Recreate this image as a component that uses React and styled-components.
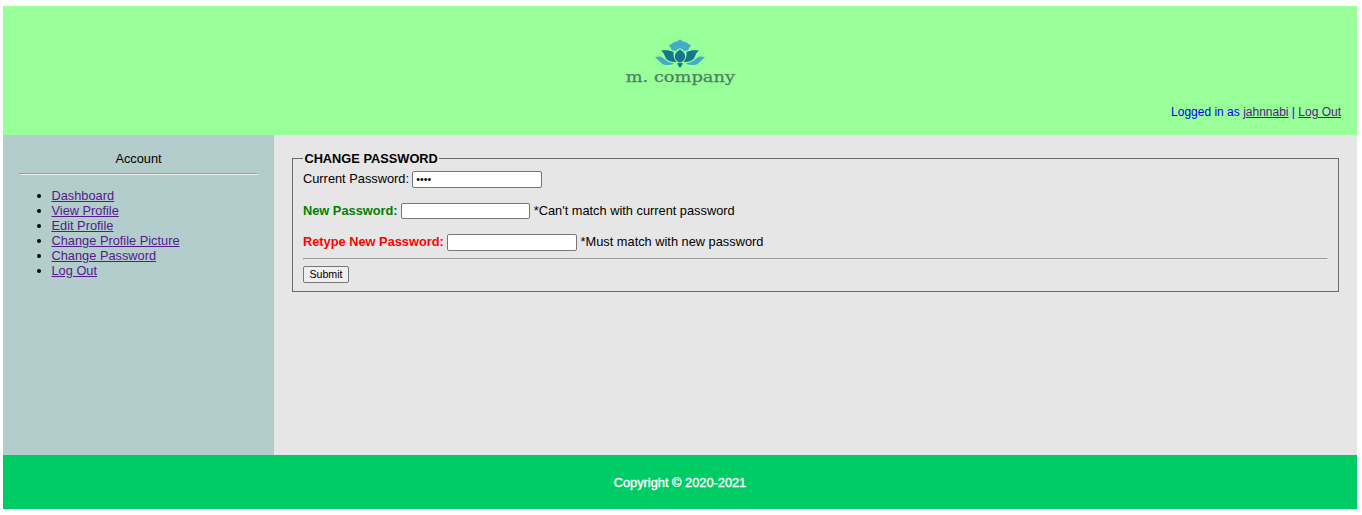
import React from "react";
import styled, { createGlobalStyle } from "styled-components";

const GlobalStyle = createGlobalStyle`
  body {
    margin: 6px 5px 6px 3px;
    background: #fff;
    font: 12.8px/15px "Liberation Sans", Arial, sans-serif;
    color: #000;
  }
`;

const Header = styled.header`
  box-sizing: border-box;
  height: 129px;
  padding: 24px 16px 0;
  background: #99ff99;
`;

const Logo = styled.svg`
  display: block;
  width: 140px;
  height: 65px;
  margin: 0 auto;
`;

const Session = styled.div`
  margin-top: 10px;
  text-align: right;
  font-size: 12px;
  color: #0000ff;
`;

const Link = styled.a`
  color: #551a8b;
  text-decoration: underline;
`;

const Body = styled.div`
  display: flex;
  height: 320px;
`;

const Sidebar = styled.nav`
  box-sizing: border-box;
  width: 271px;
  padding: 16px 16px 0;
  background: #b3cccc;
`;

const SidebarTitle = styled.div`
  text-align: center;
`;

const Rule = styled.hr`
  box-sizing: border-box;
  height: 2px;
  margin: ${(p) => p.$margin};
  border: 1px solid;
  border-color: #9a9a9a #eee #eee #9a9a9a;
`;

const Menu = styled.ul`
  margin: 0;
  padding-left: 32.5px;
`;

const Main = styled.main`
  flex: 1;
  padding: 16px 18px 0;
  background: #e6e6e6;
`;

const Fieldset = styled.fieldset`
  box-sizing: border-box;
  height: 141px;
  margin: 0;
  padding: 5px 10px 0;
  border: 1px solid #696969;
`;

const Legend = styled.legend`
  padding: 0 1.4px;
  font-weight: bold;
`;

const Row = styled.div`
  display: flex;
  align-items: center;
  gap: 3.4px;
  height: 17px;
  margin-bottom: ${(p) => p.$gap || 0};
`;

const Label = styled.label`
  padding-bottom: 2px;
  color: ${(p) => p.$color || "#000"};
  font-weight: ${(p) => (p.$color ? "bold" : "normal")};
`;

const Hint = styled.span`
  padding-bottom: 2px;
`;

const Field = styled.input`
  box-sizing: border-box;
  align-self: flex-start;
  width: ${(p) => p.$width || "130px"};
  height: ${(p) => p.$height || "17px"};
  margin: 0;
  padding: 0 3px 2px;
  border: 1px solid #767676;
  border-radius: 2px;
  background: #fff;
  font: 10.67px "Liberation Sans", Arial, sans-serif;
`;

const Submit = styled.button`
  display: block;
  box-sizing: border-box;
  width: 46px;
  height: 17px;
  padding: 0;
  border: 1px solid #767676;
  border-radius: 2px;
  background: #efefef;
  color: #000;
  font: 10.67px/13px "Liberation Sans", Arial, sans-serif;
`;

const Footer = styled.footer`
  display: flex;
  align-items: center;
  justify-content: center;
  height: 54px;
  background: #00cc66;
  color: #fff;
  -webkit-text-stroke: 0.35px #fff;
`;

const menuItems = [
  "Dashboard",
  "View Profile",
  "Edit Profile",
  "Change Profile Picture",
  "Change Password",
  "Log Out",
];

function CompanyLogo() {
  return (
    <Logo viewBox="0 0 140 65" role="img" aria-label="m. company">
      <g fill="#43adc6">
        <path d="M70 9.3C72 11.3 74 12 76.5 12.2C77.5 13.5 79 14.5 81.2 14.9C79.6 17 79 19 77.5 20.5L74 21C73 19.6 71.4 18.8 70 18.2C68.6 18.8 67 19.6 66 21L62.5 20.5C61 19 60.4 17 58.8 14.9C61 14.5 62.5 13.5 63.5 12.2C66 12 68 11.3 70 9.3Z" />
        <path d="M45 27.3C48 26.2 51 26 53.5 28.2C56.5 31.5 60 32.7 64.2 33.5C60 35.6 54.5 35.4 51.7 33.8C52.3 33.2 51.4 32.4 50.3 32.2C48.5 31 47.3 28.8 45 27.3Z" />
        <path d="M95 27.3C92 26.2 89 26 86.5 28.2C83.5 31.5 80 32.7 75.8 33.5C80 35.6 85.5 35.4 88.3 33.8C87.7 33.2 88.6 32.4 89.7 32.2C91.5 31 92.7 28.8 95 27.3Z" />
      </g>
      <g fill="#14768f">
        <path d="M70 19.5C73 21.2 75.2 23.5 75.2 26.5C75.2 29.5 72.8 31.7 70 32.5C67.2 31.7 64.8 29.5 64.8 26.5C64.8 23.5 67 21.2 70 19.5Z" />
        <path d="M51 20.5C55 20 60 19.8 63.6 22C63 25.5 63.8 29 66.5 32C62 32.2 57.5 31.2 55.7 28C54.8 25.5 53.6 22 51 20.5Z" />
        <path d="M89 20.5C85 20 80 19.8 76.4 22C77 25.5 76.2 29 73.5 32C78 32.2 82.5 31.2 84.3 28C85.2 25.5 86.4 22 89 20.5Z" />
        <path d="M67.5 33H72.5L72.2 35.2L71.3 35.6V37.2H68.7V35.6L67.8 35.2Z" />
      </g>
      <text
        x="15.7"
        y="52.3"
        textLength="109.3"
        lengthAdjust="spacingAndGlyphs"
        fontFamily='"DejaVu Serif", serif'
        fontSize="14"
        fill="#4d8065"
        stroke="#4d8065"
        strokeWidth="0.25"
      >
        m. company
      </text>
    </Logo>
  );
}

export default function App() {
  return (
    <>
      <GlobalStyle />
      <Header>
        <CompanyLogo />
        <Session>
          Logged in as <Link href="#">jahnnabi</Link> | <Link href="#">Log Out</Link>
        </Session>
      </Header>
      <Body>
        <Sidebar>
          <SidebarTitle>Account</SidebarTitle>
          <Rule $margin="7px 0 13px" />
          <Menu>
            {menuItems.map((item) => (
              <li key={item}>
                <Link href="#">{item}</Link>
              </li>
            ))}
          </Menu>
        </Sidebar>
        <Main>
          <Fieldset>
            <Legend>CHANGE PASSWORD</Legend>
            <Row $gap="15px">
              <Label htmlFor="current">Current Password:</Label>
              <Field id="current" type="password" defaultValue="1234" />
            </Row>
            <Row $gap="14px">
              <Label htmlFor="next" $color="#008000">New Password:</Label>
              <Field id="next" type="password" $height="16px" $width="129.4px" />
              <Hint>*Can't match with current password</Hint>
            </Row>
            <Row>
              <Label htmlFor="retype" $color="#ff0000">Retype New Password:</Label>
              <Field id="retype" type="password" />
              <Hint>*Must match with new password</Hint>
            </Row>
            <Rule $margin="7px 0 6px" />
            <Submit type="button">Submit</Submit>
          </Fieldset>
        </Main>
      </Body>
      <Footer>Copyright © 2020-2021</Footer>
    </>
  );
}
